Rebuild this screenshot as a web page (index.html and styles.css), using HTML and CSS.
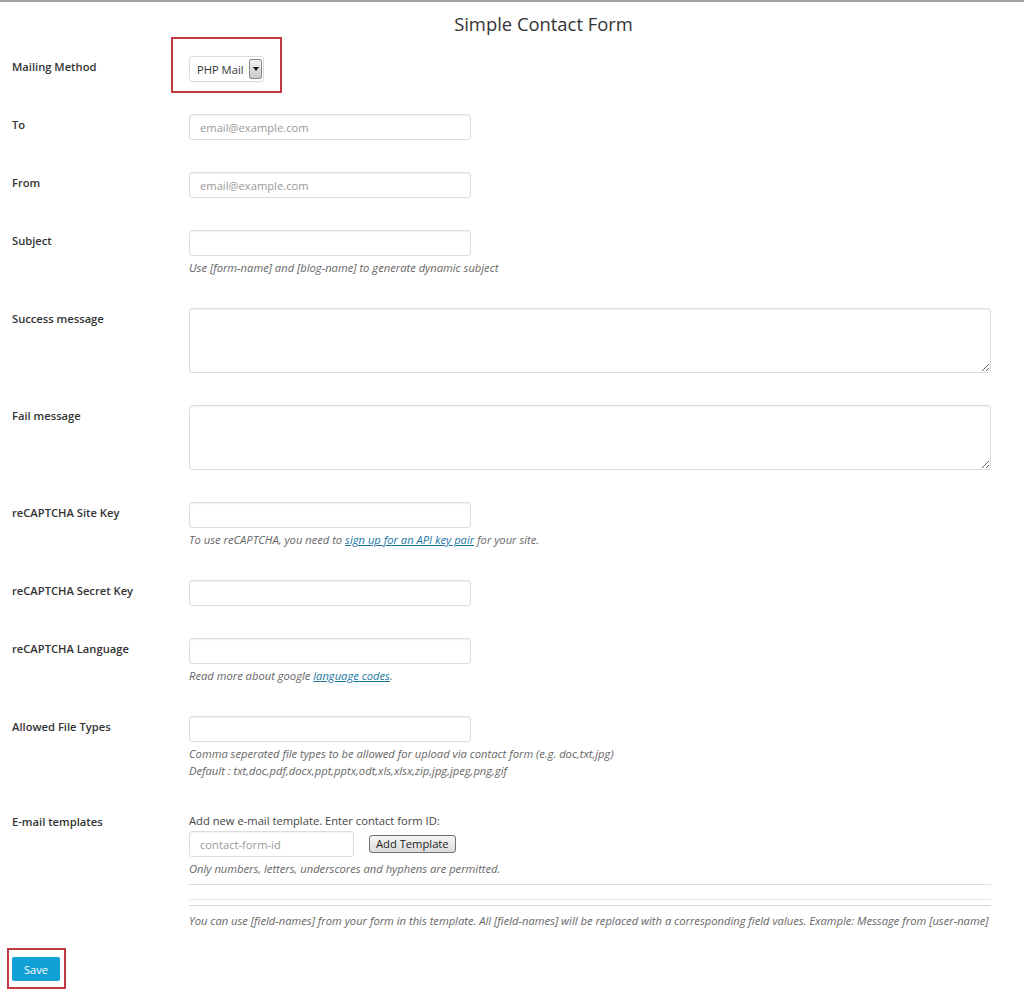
FILE: index.html
```html
<!DOCTYPE html>
<html lang="en">
<head>
  <meta charset="UTF-8">
  <title>Simple Contact Form</title>
  <link rel="stylesheet" href="styles.css">
</head>
<body>
  <div class="wrap">
    <h1>Simple Contact Form</h1>

    <table class="form-table">
      <tr>
        <th>Mailing Method</th>
        <td>
          <div class="marked">
            <div class="select-box">
              <span class="select-text">PHP Mail</span>
              <span class="select-arrow"></span>
            </div>
            <span class="highlight hl-select"></span>
          </div>
        </td>
      </tr>
      <tr>
        <th>To</th>
        <td><input type="text" class="regular" placeholder="email@example.com"></td>
      </tr>
      <tr>
        <th>From</th>
        <td><input type="text" class="regular" placeholder="email@example.com"></td>
      </tr>
      <tr>
        <th>Subject</th>
        <td>
          <input type="text" class="regular">
          <p class="description">Use [form-name] and [blog-name] to generate dynamic subject</p>
        </td>
      </tr>
      <tr>
        <th>Success message</th>
        <td><textarea class="large"></textarea></td>
      </tr>
      <tr>
        <th>Fail message</th>
        <td><textarea class="large"></textarea></td>
      </tr>
      <tr>
        <th>reCAPTCHA Site Key</th>
        <td>
          <input type="text" class="regular">
          <p class="description">To use reCAPTCHA, you need to <a href="#">sign up for an API key pair</a> for your site.</p>
        </td>
      </tr>
      <tr>
        <th>reCAPTCHA Secret Key</th>
        <td><input type="text" class="regular"></td>
      </tr>
      <tr>
        <th>reCAPTCHA Language</th>
        <td>
          <input type="text" class="regular">
          <p class="description">Read more about google <a href="#">language codes</a>.</p>
        </td>
      </tr>
      <tr>
        <th>Allowed File Types</th>
        <td>
          <input type="text" class="regular">
          <p class="description">Comma seperated file types to be allowed for upload via contact form (e.g. doc,txt,jpg)<br>Default : txt,doc,pdf,docx,ppt,pptx,odt,xls,xlsx,zip,jpg,jpeg,png,gif</p>
        </td>
      </tr>
      <tr>
        <th>E-mail templates</th>
        <td>
          <p class="plain">Add new e-mail template. Enter contact form ID:</p>
          <div class="template-row">
            <input type="text" class="small" placeholder="contact-form-id">
            <button class="btn-grey">Add Template</button>
          </div>
          <p class="description">Only numbers, letters, underscores and hyphens are permitted.</p>
          <hr class="sep">
          <div class="templates"></div>
          <p class="description">You can use [field-names] from your form in this template. All [field-names] will be replaced with a corresponding field values. Example: Message from [user-name]</p>
        </td>
      </tr>
    </table>

    <div class="marked save-wrap">
      <button class="btn-primary">Save</button>
      <span class="highlight hl-save"></span>
    </div>
  </div>
</body>
</html>
```

FILE: styles.css
```css
body {
  margin: 0;
  font-family: "Open Sans", "Liberation Sans", sans-serif;
  color: #444;
  background: #fff;
  border-top: 2px solid #a3a3a3;
}
.wrap {
  padding: 0 33px 40px 12px;
}
h1 {
  margin: 10px 0 4px;
  padding-left: 84px;
  font-size: 18.4px;
  line-height: 24px;
  font-weight: 400;
  text-align: center;
  color: #333;
}
.form-table {
  width: 100%;
  border-collapse: collapse;
}
.form-table th {
  width: 177px;
  padding: 19px 0 0;
  vertical-align: top;
  text-align: left;
  font-size: 11.2px;
  line-height: 16px;
  font-weight: 600;
  color: #333;
}
.form-table td {
  padding: 16px 0;
  vertical-align: top;
}
input, textarea {
  font-family: inherit;
  font-size: 11.2px;
  color: #333;
  border: 1px solid #ddd;
  border-radius: 3px;
  box-shadow: inset 0 1px 2px rgba(0, 0, 0, 0.06);
  box-sizing: border-box;
  margin: 0;
  padding: 0 10px;
  display: block;
}
input::placeholder {
  color: #999;
}
input.regular {
  width: 282px;
  height: 26px;
}
input.small {
  width: 165px;
  height: 26px;
}
textarea.large {
  width: 100%;
  height: 65px;
  resize: vertical;
}
.description {
  margin: 3px 0 0;
  font-size: 11.2px;
  line-height: 17px;
  font-style: italic;
  color: #666;
}
.description a {
  color: #1a76a0;
}
.plain {
  margin: 1px 0 2px;
  font-size: 11.2px;
  line-height: 17px;
  color: #444;
}
.marked {
  position: relative;
  display: inline-block;
}
.highlight {
  position: absolute;
  border: 2px solid #c33a44;
  pointer-events: none;
}
.hl-select {
  left: -18px;
  top: -19px;
  width: 107px;
  height: 52px;
}
.select-box {
  display: flex;
  align-items: center;
  width: 75px;
  height: 26px;
  box-sizing: border-box;
  border: 1px solid #ddd;
  border-radius: 3px;
  padding: 0 1px 0 7px;
  box-shadow: 0 1px 1px rgba(0, 0, 0, 0.04);
}
.select-text {
  flex: 1;
  font-size: 11.2px;
  color: #333;
}
.select-arrow {
  position: relative;
  width: 13px;
  height: 20px;
  box-sizing: border-box;
  border: 1px solid #8a8a8a;
  border-radius: 2px;
  background: linear-gradient(#f2f2f2, #c9c9c9);
}
.select-arrow::after {
  content: "";
  position: absolute;
  left: 3px;
  top: 7px;
  border-left: 3px solid transparent;
  border-right: 3px solid transparent;
  border-top: 4px solid #111;
}
.template-row {
  display: flex;
  align-items: center;
  gap: 15px;
}
.btn-grey {
  height: 18px;
  padding: 0 6px;
  font-family: inherit;
  font-size: 11.2px;
  color: #222;
  border: 1px solid #707070;
  border-radius: 3px;
  background: linear-gradient(#f6f6f6, #dcdcdc);
  line-height: 16px;
}
.sep {
  margin: 7px 0 0;
  border: 0;
  border-top: 1px solid #ddd;
}
.templates {
  margin-top: 14px;
  height: 5px;
  border-top: 1px solid #e8e8e8;
  border-bottom: 1px solid #d8d8d8;
}
.form-table td .templates + .description {
  margin-top: 6px;
}
.save-wrap {
  margin-top: 12px;
}
.btn-primary {
  display: block;
  width: 48px;
  height: 24px;
  padding: 0;
  font-family: inherit;
  font-size: 11.2px;
  color: #fff;
  background: #11a0d5;
  border: 0;
  border-radius: 2px;
}
.hl-save {
  left: -5px;
  top: -9px;
  width: 55px;
  height: 37px;
}
```
